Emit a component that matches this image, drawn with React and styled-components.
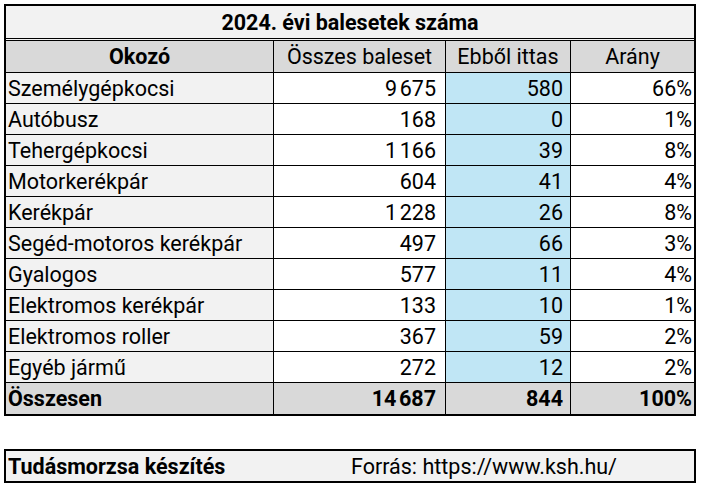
import React from "react";
import styled, { createGlobalStyle } from "styled-components";

const GlobalStyle = createGlobalStyle`
  body {
    margin: 0;
    background: #ffffff;
    font-family: Roboto, "Liberation Sans", Arial, sans-serif;
    color: #000000;
  }
`;

const Page = styled.div`
  padding: 4px 0 0 4px;
  width: 692px;
`;

const Table = styled.table`
  border: 2px solid #000;
  border-spacing: 0;
  width: 692px;
  table-layout: fixed;
  font-size: 21.5px;
`;

const TitleCell = styled.th`
  background: #f2f2f2;
  height: 32px;
  padding: 0;
  font-weight: 700;
  text-align: center;
  border-bottom: 3px double #000;
`;

const HeadCell = styled.th`
  background: #d9d9d9;
  height: 31px;
  padding: 0;
  font-weight: ${(p) => (p.$bold ? 700 : 400)};
  text-align: center;
  border-bottom: 1px solid #000;
  border-right: ${(p) => (p.$last ? "none" : "1px solid #000")};
`;

const Cell = styled.td`
  height: ${(p) => (p.$noBottom ? 31 : 30)}px;
  padding: 0 ${(p) => p.$pr || 0}px 0 ${(p) => p.$pl || 0}px;
  background: ${(p) => p.$bg || "#fff"};
  font-weight: ${(p) => (p.$bold ? 700 : 400)};
  text-align: ${(p) => (p.$left ? "left" : "right")};
  border-bottom: ${(p) => (p.$noBottom ? "none" : "1px solid #000")};
  border-right: ${(p) => (p.$last ? "none" : "1px solid #000")};
  white-space: nowrap;
`;

const Footer = styled.div`
  margin-top: 33px;
  border: 2px solid #000;
  background: #f2f2f2;
  height: 30px;
  display: grid;
  grid-template-columns: 268px 1fr;
  align-items: center;
  font-size: 21.5px;
`;

const FooterLeft = styled.div`
  padding-left: 2px;
  font-weight: 700;
`;

const FooterRight = styled.div`
  text-align: center;
`;

const rows = [
  ["Személygépkocsi", "9\u202F675", "580", "66%"],
  ["Autóbusz", "168", "0", "1%"],
  ["Tehergépkocsi", "1\u202F166", "39", "8%"],
  ["Motorkerékpár", "604", "41", "4%"],
  ["Kerékpár", "1\u202F228", "26", "8%"],
  ["Segéd-motoros kerékpár", "497", "66", "3%"],
  ["Gyalogos", "577", "11", "4%"],
  ["Elektromos kerékpár", "133", "10", "1%"],
  ["Elektromos roller", "367", "59", "2%"],
  ["Egyéb jármű", "272", "12", "2%"],
];

function Row({ data, total }) {
  const gray = total ? "#d9d9d9" : null;
  return (
    <tr>
      <Cell $left $pl={2} $bold={total} $bg={gray || "#f2f2f2"} $noBottom={total}>
        {data[0]}
      </Cell>
      <Cell $pr={9} $bold={total} $bg={gray} $noBottom={total}>
        {data[1]}
      </Cell>
      <Cell $pr={7} $bold={total} $bg={gray || "#c0e6f5"} $noBottom={total}>
        {data[2]}
      </Cell>
      <Cell $pr={2} $bold={total} $bg={gray} $noBottom={total} $last>
        {data[3]}
      </Cell>
    </tr>
  );
}

export default function App() {
  return (
    <Page>
      <GlobalStyle />
      <Table>
        <colgroup>
          <col style={{ width: 268 }} />
          <col style={{ width: 172 }} />
          <col style={{ width: 125 }} />
          <col style={{ width: 123 }} />
        </colgroup>
        <thead>
          <tr>
            <TitleCell colSpan={4}>2024. évi balesetek száma</TitleCell>
          </tr>
          <tr>
            <HeadCell $bold>Okozó</HeadCell>
            <HeadCell>Összes baleset</HeadCell>
            <HeadCell>Ebből ittas</HeadCell>
            <HeadCell $last>Arány</HeadCell>
          </tr>
        </thead>
        <tbody>
          {rows.map((r) => (
            <Row key={r[0]} data={r} />
          ))}
          <Row total data={["Összesen", "14\u202F687", "844", "100%"]} />
        </tbody>
      </Table>
      <Footer>
        <FooterLeft>Tudásmorzsa készítés</FooterLeft>
        <FooterRight>Forrás: https://www.ksh.hu/</FooterRight>
      </Footer>
    </Page>
  );
}
